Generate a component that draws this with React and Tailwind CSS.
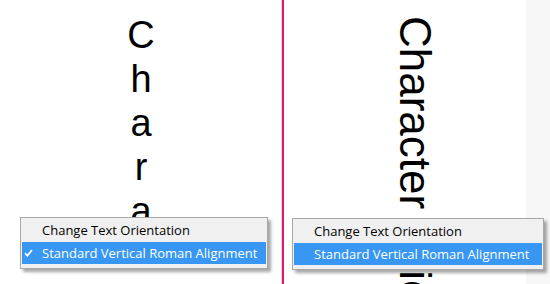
import React from 'react';

const letters = ['C', 'h', 'a', 'r', 'a', 'c', 't', 'e', 'r'];

const ContextMenu = ({ checked, className }) => (
  <div
    className={`absolute flex flex-col border border-[#a7a7a7] bg-[#f0f0f0] pt-[1px] pb-[4px] px-[1px] shadow-[3px_3px_3px_rgba(0,0,0,0.35)] whitespace-nowrap ${className}`}
    style={{ fontFamily: '"Open Sans", "Noto Sans", sans-serif' }}>
    <div className="h-[23px] flex items-center pl-[20px] text-[13px] text-black leading-none">
      Change Text Orientation
    </div>
    <div className="relative h-[22px] flex items-center pl-[20px] bg-[#3797f2] text-[13px] text-white leading-none">
      {checked && (
        <svg
          className="absolute left-[2px] top-[7px]"
          width="9"
          height="8"
          viewBox="0 0 9 8">
          <path
            d="M1 4.2 L3.4 6.6 L8 1"
            fill="none"
            stroke="white"
            strokeWidth="1.8"
          />
        </svg>
      )}
      Standard Vertical Roman Alignment
    </div>
  </div>
);

export default function App() {
  return (
    <div className="w-[550px] h-[284px] flex bg-white overflow-hidden">
      {/* left: upright letters */}
      <div className="relative w-[281px] h-full overflow-hidden">
        <div
          className="flex flex-col items-center w-[282px] pt-[13px] text-[38px] leading-[44px] text-black"
          style={{ fontFamily: '"Liberation Sans", Arial, sans-serif' }}>
          {letters.map((l, i) => (
            <span key={i}>{l}</span>
          ))}
        </div>
        <ContextMenu checked className="left-[20px] top-[217px] w-[248px]" />
      </div>
      <div className="w-[1px] h-full bg-[#d6dcd8]" />
      <div className="w-[2px] h-full bg-[#e8156f]" />

      {/* right: rotated text */}
      <div className="relative flex-1 flex h-full overflow-hidden">
        <div className="w-[242px] h-full">
          <div
            className="ml-[109px] mt-[16px] text-[44px] leading-none text-black [writing-mode:vertical-rl] whitespace-nowrap"
            style={{ fontFamily: '"Liberation Sans", Arial, sans-serif' }}>
            Character Orientation
          </div>
        </div>
        <div className="flex-1 h-full bg-[#f7f7f7]" />
        <ContextMenu className="left-[8px] top-[218px] w-[252px]" />
      </div>
    </div>
  );
}
